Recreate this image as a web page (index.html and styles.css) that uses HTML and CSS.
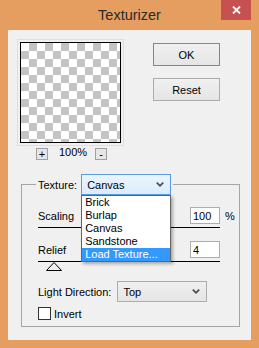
FILE: index.html
```html
<!DOCTYPE html>
<html lang="en">
<head>
    <meta charset="UTF-8">
    <title>Texturizer</title>
    <link rel="stylesheet" href="styles.css">
</head>
<body>
    <div class="window">
        <div class="titlebar">
            <span></span>
            <div class="title">Texturizer</div>
            <div class="close">
                <svg width="9" height="8" viewBox="0 0 9 8"><path d="M1 0.5 L8 7.5 M8 0.5 L1 7.5" stroke="#fff" stroke-width="1.8" fill="none"/></svg>
            </div>
        </div>

        <div class="client">
            <div class="top">
                <div class="preview-col">
                    <div class="preview"></div>
                    <div class="zoom-row">
                        <button class="zoom-btn">+</button>
                        <span class="zoom-value">100%</span>
                        <button class="zoom-btn">-</button>
                    </div>
                </div>
                <div class="actions">
                    <button class="btn btn-default">OK</button>
                    <button class="btn">Reset</button>
                </div>
            </div>

            <fieldset class="group">
                <legend>
                    <span>Texture:</span>
                    <div class="combo open">
                        <span>Canvas</span>
                        <svg class="chevron" width="8" height="5" viewBox="0 0 8 5"><path d="M0.8 0.6 L4 3.8 L7.2 0.6" stroke="#4a4a4a" stroke-width="1.7" fill="none"/></svg>
                        <ul class="combo-list">
                            <li>Brick</li>
                            <li>Burlap</li>
                            <li>Canvas</li>
                            <li>Sandstone</li>
                            <li class="active">Load Texture...</li>
                        </ul>
                    </div>
                </legend>

                <div class="field-row">
                    <span class="label">Scaling</span>
                    <input class="num" type="text" value="100">
                    <span class="unit">%</span>
                </div>
                <div class="track"></div>

                <div class="field-row relief">
                    <span class="label">Relief</span>
                    <input class="num" type="text" value="4">
                    <span class="unit"></span>
                </div>
                <div class="track"></div>
                <svg class="thumb" width="16" height="9" viewBox="0 0 16 9"><polygon points="8,0.5 15.5,8.5 0.5,8.5" fill="#f0f0f0" stroke="#000" stroke-width="1"/></svg>

                <div class="light-row">
                    <span>Light Direction:</span>
                    <div class="combo">
                        <span>Top</span>
                        <svg class="chevron" width="8" height="5" viewBox="0 0 8 5"><path d="M0.8 0.6 L4 3.8 L7.2 0.6" stroke="#4a4a4a" stroke-width="1.7" fill="none"/></svg>
                    </div>
                </div>

                <label class="check">
                    <input type="checkbox">
                    <span>Invert</span>
                </label>
            </fieldset>
        </div>
    </div>
</body>
</html>
```
FILE: styles.css
```css
body {
    margin: 0;
    font-family: "Liberation Sans", Arial, sans-serif;
    font-size: 11px;
    color: #000;
}

.window {
    width: 259px;
    height: 348px;
    background-color: #e59e60;
    display: flex;
    flex-direction: column;
}

.titlebar {
    height: 30px;
    display: grid;
    grid-template-columns: 1fr auto 1fr;
}

.title {
    font-size: 14.5px;
    line-height: 30px;
    color: #2a2a2a;
}

.close {
    justify-self: end;
    margin-right: 8px;
    width: 30px;
    height: 20px;
    background-color: #c75050;
    display: flex;
    align-items: center;
    justify-content: center;
}

.client {
    flex: 1;
    margin: 0 8px 8px;
    background-color: #f0f0f0;
    padding: 12px 0 0 12px;
}

.top {
    display: flex;
    align-items: flex-start;
}

.preview {
    width: 101px;
    height: 101px;
    box-sizing: border-box;
    border: 1px solid #000;
    outline: 1px solid #dedede;
    outline-offset: 2px;
    background: conic-gradient(#c4c4c4 25%, #fff 0 50%, #c4c4c4 0 75%, #fff 0) 0 0 / 16px 16px;
}

.zoom-row {
    display: flex;
    align-items: flex-start;
    margin-top: 5px;
    padding-left: 16px;
}

.zoom-btn {
    width: 12px;
    height: 12px;
    padding: 0;
    border: 1px solid #a0a0a0;
    background-color: #e6e6e6;
    font: 11px/10px "Liberation Sans", Arial, sans-serif;
    color: #000;
}

.zoom-value {
    margin: -1px 8px 0 11px;
    line-height: 11px;
}

.actions {
    display: flex;
    flex-direction: column;
    gap: 12px;
    margin: 1px 0 0 32px;
}

.btn {
    width: 67px;
    height: 23px;
    padding: 0;
    border: 1px solid #acacac;
    background: linear-gradient(#f0f0f0, #e5e5e5);
    font: inherit;
    color: #000;
}

.btn-default {
    border-color: #3399ff;
}

.group {
    margin: 14px 0 0 1px;
    width: 219px;
    min-width: 0;
    box-sizing: border-box;
    border: 1px solid #a5a5a5;
    padding: 12px 5px 6px 16px;
}

.group legend {
    margin-left: -2px;
    padding: 0 2px;
    display: flex;
    align-items: center;
}

.combo {
    position: relative;
    width: 90px;
    height: 21px;
    box-sizing: border-box;
    border: 1px solid #acacac;
    background: linear-gradient(#f0f0f0, #e5e5e5);
    display: flex;
    align-items: center;
    justify-content: space-between;
    padding: 0 6px 0 5px;
}

.group legend .combo {
    margin-left: 4px;
}

.combo.open {
    border-color: #569de5;
    background: linear-gradient(#ebf4fc, #dcecfc);
}

.combo-list {
    position: absolute;
    top: 20px;
    left: -1px;
    width: 90px;
    box-sizing: border-box;
    margin: 0;
    padding: 0;
    list-style: none;
    background-color: #fff;
    border: 1px solid #646464;
    box-shadow: 2px 2px 3px rgba(0, 0, 0, 0.3);
    z-index: 2;
}

.combo-list li {
    height: 13px;
    line-height: 13px;
    padding-left: 3px;
}

.combo-list li.active {
    background-color: #3399ff;
    color: #fff;
}

.field-row {
    display: flex;
    align-items: center;
    height: 17px;
}

.field-row .label {
    flex: 1;
}

.num {
    width: 30px;
    height: 17px;
    box-sizing: border-box;
    border: 1px solid #abadb3;
    padding: 0 0 0 2px;
    background-color: #fff;
    font: inherit;
    color: #000;
}

.unit {
    width: 14px;
    padding-left: 5px;
    box-sizing: border-box;
}

.track {
    width: 182px;
    height: 1px;
    background-color: #000;
    margin-top: 3px;
}

.relief {
    margin-top: 13px;
}

.thumb {
    display: block;
    margin-left: 8px;
}

.light-row {
    display: flex;
    align-items: center;
    gap: 6px;
    margin-top: 10px;
}

.check {
    display: flex;
    align-items: center;
    gap: 3px;
    margin-top: 5px;
}

.check input {
    appearance: none;
    width: 13px;
    height: 13px;
    margin: 0;
    border: 1px solid #333;
    background-color: #fff;
}
```
